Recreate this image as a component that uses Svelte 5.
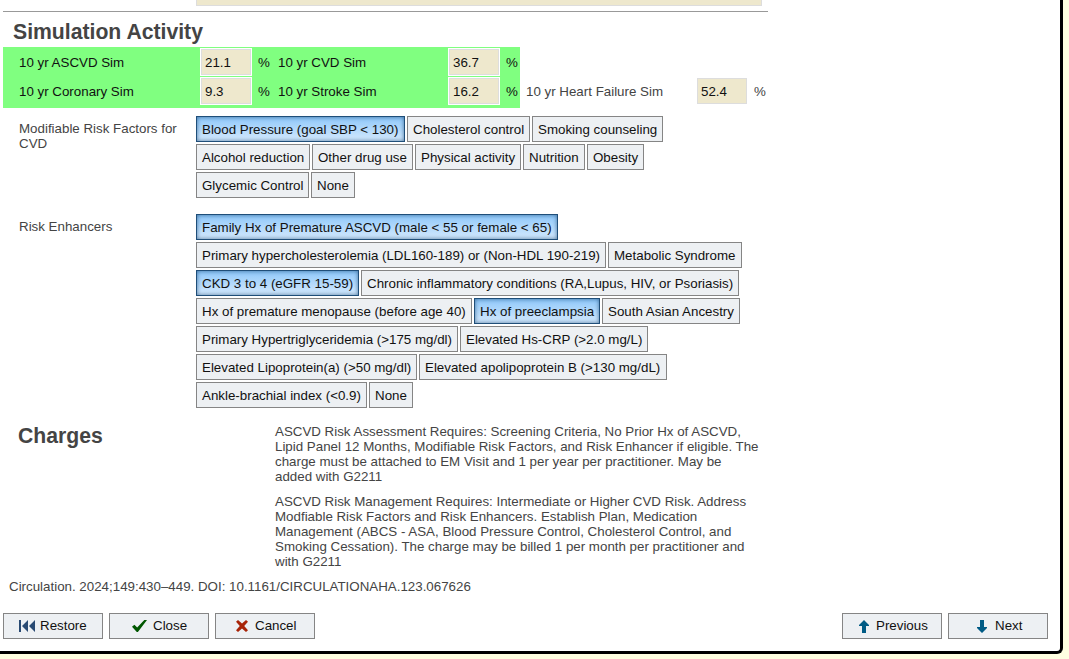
<script>
  const modifiable = [
    [['Blood Pressure (goal SBP < 130)', 209, true], ['Cholesterol control', 123], ['Smoking counseling', 131]],
    [['Alcohol reduction', 114], ['Other drug use', 101], ['Physical activity', 106], ['Nutrition', 62], ['Obesity', 57]],
    [['Glycemic Control', 113], ['None', 44]]
  ];
  const enhancers = [
    [['Family Hx of Premature ASCVD (male < 55 or female < 65)', 362, true]],
    [['Primary hypercholesterolemia (LDL160-189) or (Non-HDL 190-219)', 410], ['Metabolic Syndrome', 134]],
    [['CKD 3 to 4 (eGFR 15-59)', 163, true], ['Chronic inflammatory conditions (RA,Lupus, HIV, or Psoriasis)', 378]],
    [['Hx of premature menopause (before age 40)', 276], ['Hx of preeclampsia', 126, true], ['South Asian Ancestry', 138]],
    [['Primary Hypertriglyceridemia (>175 mg/dl)', 262], ['Elevated Hs-CRP (>2.0 mg/L)', 188]],
    [['Elevated Lipoprotein(a) (>50 mg/dl)', 221], ['Elevated apolipoprotein B (>130 mg/dL)', 248]],
    [['Ankle-brachial index (<0.9)', 171], ['None', 44]]
  ];
  const assessment = [
    'ASCVD Risk Assessment Requires: Screening Criteria, No Prior Hx of ASCVD,',
    'Lipid Panel 12 Months, Modifiable Risk Factors, and Risk Enhancer if eligible. The',
    'charge must be attached to EM Visit and 1 per year per practitioner. May be',
    'added with G2211'
  ];
  const management = [
    'ASCVD Risk Management Requires: Intermediate or Higher CVD Risk. Address',
    'Modfiable Risk Factors and Risk Enhancers. Establish Plan, Medication',
    'Management (ABCS - ASA, Blood Pressure Control, Cholesterol Control, and',
    'Smoking Cessation). The charge may be billed 1 per month per practitioner and',
    'with G2211'
  ];
</script>

{#snippet chips(rows)}
  <div class="chips">
    {#each rows as row}
      <div class="chip-row">
        {#each row as [label, width, on]}
          <button class="chip" class:on style:width="{width}px">{label}</button>
        {/each}
      </div>
    {/each}
  </div>
{/snippet}

<div class="panel">
  <div class="field-end"></div>
  <div class="rule"></div>
  <h2>Simulation Activity</h2>

  <div class="sim">
    <div class="green">
      <span>10 yr ASCVD Sim</span><span class="val">21.1</span><span class="pct">%</span>
      <span>10 yr CVD Sim</span><span class="val">36.7</span><span class="pct">%</span>
      <span>10 yr Coronary Sim</span><span class="val">9.3</span><span class="pct">%</span>
      <span>10 yr Stroke Sim</span><span class="val">16.2</span><span class="pct">%</span>
    </div>
    <div class="heart">
      <span>10 yr Heart Failure Sim</span><span class="val plain">52.4</span><span class="pct">%</span>
    </div>
  </div>

  <div class="group">
    <div class="label">Modifiable Risk Factors for CVD</div>
    {@render chips(modifiable)}
  </div>
  <div class="group second">
    <div class="label">Risk Enhancers</div>
    {@render chips(enhancers)}
  </div>

  <div class="charges">
    <h2>Charges</h2>
    <div class="notes">
      <p>{#each assessment as line}<span>{line}</span>{/each}</p>
      <p>{#each management as line}<span>{line}</span>{/each}</p>
    </div>
  </div>

  <div class="cite">Circulation. 2024;149:430–449. DOI: 10.1161/CIRCULATIONAHA.123.067626</div>

  <div class="bar">
    <button class="btn restore">
      <svg width="16" height="12" viewBox="0 0 16 12" fill="#294a73"><path d="M0 0h2v12H0zM9 0v12L3 6zM16 0v12L10 6z" /></svg><span>Restore</span>
    </button>
    <button class="btn close">
      <svg width="15" height="12" viewBox="0 0 15 12"><path d="M0 6.8 2.4 4.8 5.2 7.4 12.3 0H15L5.9 12H4.8z" fill="#005700" /></svg><span>Close</span>
    </button>
    <button class="btn cancel">
      <svg width="12" height="12" viewBox="0 0 12 12"><path d="M2 0 6 3.6 10 0 12 1.8 8.2 6 12 10.2 10 12 6 8.4 2 12 0 10.2 3.8 6 0 1.8z" fill="#a82408" /></svg><span>Cancel</span>
    </button>
    <span class="grow"></span>
    <button class="btn prev">
      <svg width="10" height="13" viewBox="0 0 10 13"><path d="M5 0 10 5v1H7v7H3V6H0V5z" fill="#005b85" /></svg><span>Previous</span>
    </button>
    <button class="btn next">
      <svg width="10" height="13" viewBox="0 0 10 13"><path d="M5 13 10 8V7H7V0H3v7H0v1z" fill="#005b85" /></svg><span>Next</span>
    </button>
  </div>
</div>

<style>
  :global(body) { background: #ffffe1; overflow: hidden; }
  .panel {
    box-sizing: border-box;
    width: 1063px;
    height: 654px;
    background: #fff;
    border: solid #000;
    border-width: 0 3px 3px 0;
    border-radius: 0 0 6px 0;
    display: flex;
    flex-direction: column;
    font: 13.333px/15px "Liberation Sans", Arial, sans-serif;
    color: #444;
  }
  .field-end {
    box-sizing: border-box;
    width: 566px;
    height: 6px;
    margin-left: 196px;
    background: #eee8cd;
    border: 1px solid #ddd;
    border-top: 0;
  }
  .rule { width: 765px; height: 1px; margin: 5px 0 0 3px; background: #999; }
  h2 { margin: 0; font-size: 21.2px; line-height: 24px; font-weight: bold; }
  .rule + h2 { margin: 8px 0 0 13px; height: 27px; }
  .sim { display: flex; align-items: flex-start; margin-left: 3px; height: 61px; }
  .green {
    box-sizing: border-box;
    width: 517px;
    height: 61px;
    padding: 1px 0 0 16px;
    background: #80ff80;
    color: #111;
    display: grid;
    grid-template-columns: 181px 52px 26px 170px 52px 20px;
    grid-auto-rows: 29px;
    line-height: 29px;
  }
  .val {
    box-sizing: border-box;
    height: 28px;
    padding-left: 4px;
    border: 1px solid #ddd;
    background: #eee8cd;
    color: #111;
    line-height: 27px;
  }
  .green .val { border-color: #fff; box-shadow: inset 0 0 0 1px #ddd; }
  .pct { padding-left: 6px; }
  .heart { display: flex; padding: 31px 0 0 6px; line-height: 27px; }
  .heart > span:first-child { width: 171px; }
  .val.plain { width: 50px; height: 26px; padding-left: 3px; line-height: 25px; }
  .heart .pct { padding-left: 7px; }
  .group { display: flex; margin-top: 8px; }
  .group.second { margin-top: 16px; }
  .label { box-sizing: border-box; width: 196px; padding: 5px 10px 0 19px; }
  .chips { display: flex; flex-direction: column; gap: 2px; }
  .chip-row { display: flex; gap: 2px; }
  button {
    box-sizing: border-box;
    height: 26px;
    margin: 0;
    border: 1px solid #858585;
    background: #edf0f3;
    color: #111;
    font: inherit;
    white-space: nowrap;
  }
  .chip { padding: 0 5px; text-align: left; }
  .chip.on {
    border-color: #1f4e79;
    background: linear-gradient(#8fc8fa, #d4e9fd);
    box-shadow: inset 0 0 4px rgba(31, 78, 121, 0.75);
  }
  .charges { display: flex; height: 154px; margin-top: 16px; }
  .charges h2 { width: 257px; padding-left: 18px; }
  .notes p { margin: 0 0 10px; }
  .notes span { display: block; white-space: nowrap; }
  .cite { margin: 1px 0 0 9px; }
  .bar { display: flex; gap: 6px; margin: 19px 12px 0 3px; }
  .grow { flex: 1; }
  .btn { width: 100px; padding: 0; display: flex; align-items: center; }
  .btn span { padding-bottom: 1px; }
  .restore svg { margin: 0 5px 0 15px; }
  .close svg { margin: 0 6px 0 22px; }
  .cancel svg { margin: 0 7px 0 20px; }
  .prev svg { margin: 0 7px 0 16px; }
  .next svg { margin: 0 8px 0 28px; }
</style>
